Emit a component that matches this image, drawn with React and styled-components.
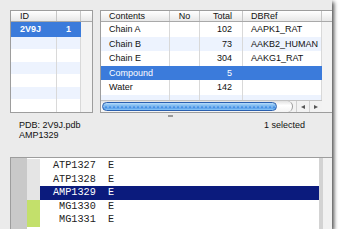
import React from "react";
import styled, { createGlobalStyle } from "styled-components";

const GlobalStyle = createGlobalStyle`
  html, body { margin: 0; padding: 0; background: #fff; }
  body { font-family: "Liberation Sans", Arial, sans-serif; }
`;

const Window = styled.div`
  width: 332px;
  height: 229px;
  box-sizing: border-box;
  padding: 10px 0 0 10px;
  background: #ebebeb;
  box-shadow: 2px 2px 4px rgba(0, 0, 0, 0.7);
  overflow: hidden;
  display: flex;
  flex-direction: column;
`;

const TopRow = styled.div`
  display: flex;
  gap: 7px;
  height: 103px;
  flex-shrink: 0;
`;

const Table = styled.div`
  display: flex;
  flex-direction: column;
  box-sizing: border-box;
  height: 103px;
  background: #fff;
  border: 1px solid #9d9d9d;
  ${(p) => (p.$open ? "border-right: none; flex: 1;" : `width: ${p.$w}px;`)}
  font-size: 9px;
  color: #111;
`;

const HeaderRow = styled.div`
  display: flex;
  height: 11px;
  flex-shrink: 0;
  box-sizing: border-box;
  background: linear-gradient(#ffffff, #e8e8e8);
  border-bottom: 1px solid #a9a9a9;
`;

const HeadCell = styled.div`
  width: ${(p) => p.$w}px;
  flex-shrink: 0;
  box-sizing: border-box;
  border-right: ${(p) => (p.$last ? "none" : "1px solid #c6c6c6")};
  padding: ${(p) => p.$pad || "0 8px"};
  text-align: ${(p) => p.$align || "left"};
  line-height: 10px;
  white-space: nowrap;
  overflow: hidden;
`;

const Body = styled.div`
  display: flex;
  flex: 1;
  min-height: 0;
  overflow: hidden;
`;

const RowsCol = styled.div`
  display: flex;
  flex-direction: column;
  width: ${(p) => p.$w}px;
  flex-shrink: 0;
  overflow: hidden;
`;

const Rows = styled.div`
  flex: 1;
  min-height: 0;
  overflow: hidden;
`;

const Row = styled.div`
  display: flex;
  height: 14.5px;
  background: ${(p) => (p.$sel ? "#3b7bdb" : p.$alt ? "#edf3fe" : "#fff")};
  color: ${(p) => (p.$sel ? "#fff" : "#111")};
  font-weight: ${(p) => (p.$bold ? "bold" : "normal")};
`;

const Cell = styled.div`
  width: ${(p) => p.$w}px;
  flex-shrink: 0;
  box-sizing: border-box;
  border-right: 1px solid ${(p) => (p.$sel ? "transparent" : "#d9d9d9")};
  padding: ${(p) => p.$pad || "0 8px"};
  text-align: ${(p) => p.$align || "left"};
  line-height: 14.5px;
  white-space: nowrap;
  overflow: hidden;
`;

const Strip = styled.div`
  width: ${(p) => p.$w}px;
  flex-shrink: 0;
  background: #f3f3f3;
`;

const HScroll = styled.div`
  display: flex;
  align-items: center;
  height: 12px;
  flex-shrink: 0;
  box-sizing: border-box;
  border-top: 1px solid #c2c2c2;
  background: #f2f2f2;
`;

const Track = styled.div`
  flex: 1;
  height: 11px;
  display: flex;
  align-items: center;
  padding-left: 1px;
  background: linear-gradient(#e2e2e2, #ffffff 40%, #f4f4f4);
  border-radius: 0 6px 6px 0;
  border-right: 1px solid #9a9a9a;
  margin-right: 3px;
`;

const Thumb = styled.div`
  width: 175px;
  height: 9px;
  box-sizing: border-box;
  border-radius: 5px;
  border: 1px solid #2a5fae;
  background:
    repeating-linear-gradient(90deg, rgba(255,255,255,0.25) 0 2px, transparent 2px 4px) center / 100% 2px no-repeat,
    linear-gradient(#b9dcfb 0%, #7bb9f0 40%, #3d8ae2 60%, #8fc9f8 100%);
`;

const ArrowBox = styled.div`
  display: flex;
  width: 26px;
  height: 100%;
`;

const ArrowBtn = styled.div`
  flex: 1;
  display: flex;
  align-items: center;
  justify-content: center;
  border-left: 1px solid #d0d0d0;
  &::before {
    content: "";
    border-top: 2.5px solid transparent;
    border-bottom: 2.5px solid transparent;
    ${(p) => (p.$dir === "left" ? "border-right: 4px solid #555;" : "border-left: 4px solid #555;")}
  }
`;

const Splitter = styled.div`
  height: 6px;
  flex-shrink: 0;
  display: flex;
  align-items: center;
  justify-content: center;
  &::before {
    content: "";
    width: 5px;
    height: 1.5px;
    margin-right: 2px;
    background: #9a9a9a;
  }
`;

const Info = styled.div`
  display: flex;
  justify-content: space-between;
  padding: 1px 27px 0 9px;
  font-size: 9px;
  line-height: 10px;
  color: #111;
`;

const Panel = styled.div`
  flex: 1;
  margin-top: 17px;
  display: flex;
  background: #fff;
  border-top: 1px solid #9d9d9d;
  border-left: 1px solid #9d9d9d;
`;

const Gutter = styled.div`
  width: 16px;
  flex-shrink: 0;
  background: #c9c9c9;
`;

const Lines = styled.div`
  flex: 1;
  padding-top: 1px;
`;

const Line = styled.div`
  display: flex;
  height: 13.5px;
`;

const Marker = styled.div`
  width: 13px;
  flex-shrink: 0;
  background: ${(p) => p.$color};
`;

const Code = styled.div`
  flex: 1;
  padding-left: 13px;
  background: ${(p) => (p.$sel ? "#0b1b7d" : "#fff")};
  color: ${(p) => (p.$sel ? "#fff" : "#222")};
  font-family: "Liberation Mono", "Courier New", monospace;
  font-size: 10.2px;
  line-height: 13.5px;
  white-space: pre;
`;

const PanelStrip = styled.div`
  width: 13px;
  flex-shrink: 0;
  background: linear-gradient(90deg, #d3d3d3 0 4px, #f1f1f1 4px);
`;

const leftCols = [46, 24];
const rightCols = [69, 30, 43, 79];

const chains = [
  { name: "Chain A", no: "", total: "102", db: "AAPK1_RAT" },
  { name: "Chain B", no: "", total: "73", db: "AAKB2_HUMAN" },
  { name: "Chain E", no: "", total: "304", db: "AAKG1_RAT" },
  { name: "Compound", no: "", total: "5", db: "", sel: true },
  { name: "Water", no: "", total: "142", db: "" },
  { name: "", no: "", total: "", db: "" },
];

const residues = [
  { name: "ATP1327", chain: "E", mark: "#e5e5e5" },
  { name: "ATP1328", chain: "E", mark: "#e5e5e5" },
  { name: "AMP1329", chain: "E", mark: "#e5e5e5", sel: true },
  { name: "MG1330", chain: "E", mark: "#c3e06b" },
  { name: "MG1331", chain: "E", mark: "#c3e06b" },
];

const App = () => {
  const idRows = [{ id: "2V9J", n: "1", sel: true }, {}, {}, {}, {}, {}, {}];
  return (
    <>
      <GlobalStyle />
      <Window>
        <TopRow>
          <Table $w={83}>
            <HeaderRow>
              <HeadCell $w={46} $pad="0 9px">ID</HeadCell>
              <HeadCell $w={24} />
              <HeadCell $w={11} $last />
            </HeaderRow>
            <Body>
              <RowsCol $w={70}>
                {idRows.map((r, i) => (
                  <Row key={i} $sel={r.sel} $alt={i % 2 === 1} $bold>
                    <Cell $w={leftCols[0]} $sel={r.sel} $pad="0 9px">{r.id}</Cell>
                    <Cell $w={leftCols[1]} $sel={r.sel} $align="right" $pad="0 9px">{r.n}</Cell>
                  </Row>
                ))}
              </RowsCol>
              <Strip $w={11} />
            </Body>
          </Table>

          <Table $open>
            <HeaderRow>
              <HeadCell $w={69}>Contents</HeadCell>
              <HeadCell $w={30} $align="center" $pad="0">No</HeadCell>
              <HeadCell $w={43} $align="right" $pad="0 10px">Total</HeadCell>
              <HeadCell $w={79}>DBRef</HeadCell>
              <HeadCell $w={10} $last />
            </HeaderRow>
            <Body>
              <RowsCol $w={221}>
                <Rows>
                  {chains.map((c, i) => (
                    <Row key={i} $sel={c.sel} $alt={i % 2 === 1}>
                      <Cell $w={rightCols[0]} $sel={c.sel}>{c.name}</Cell>
                      <Cell $w={rightCols[1]} $sel={c.sel} $align="center">{c.no}</Cell>
                      <Cell $w={rightCols[2]} $sel={c.sel} $align="right" $pad="0 10px">{c.total}</Cell>
                      <Cell $w={rightCols[3]} $sel={c.sel}>{c.db}</Cell>
                    </Row>
                  ))}
                </Rows>
                <HScroll>
                  <Track>
                    <Thumb />
                  </Track>
                  <ArrowBox>
                    <ArrowBtn $dir="left" />
                    <ArrowBtn $dir="right" />
                  </ArrowBox>
                </HScroll>
              </RowsCol>
              <Strip $w={10} />
            </Body>
          </Table>
        </TopRow>

        <Splitter />

        <Info>
          <div>
            PDB: 2V9J.pdb
            <br />
            AMP1329
          </div>
          <div>1 selected</div>
        </Info>

        <Panel>
          <Gutter />
          <Lines>
            {residues.map((r) => (
              <Line key={r.name}>
                <Marker $color={r.mark} />
                <Code $sel={r.sel}>{`${r.name.padStart(7, " ")}  ${r.chain}`}</Code>
              </Line>
            ))}
          </Lines>
          <PanelStrip />
        </Panel>
      </Window>
    </>
  );
};

export default App;
